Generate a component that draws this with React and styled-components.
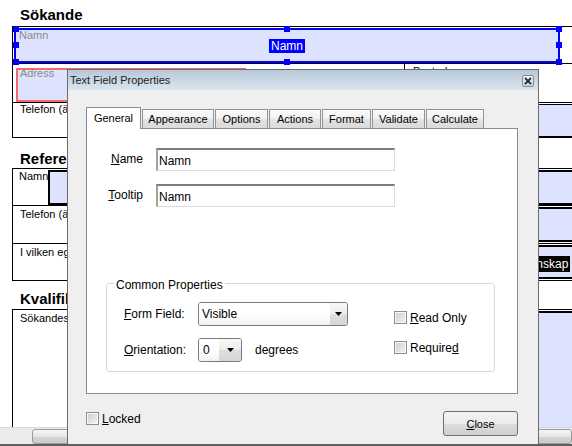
import React from 'react';
import styled, { createGlobalStyle } from 'styled-components';

const Global = createGlobalStyle`
  html, body { margin: 0; padding: 0; background: #fff; }
  body { font-family: "Liberation Sans", Arial, sans-serif; }
  * { box-sizing: border-box; }
`;

const Screen = styled.div`
  position: relative;
  width: 572px;
  height: 446px;
  overflow: hidden;
  display: flex;
  flex-direction: column;
  background: #fff;
`;

const Doc = styled.div`
  flex: 1;
  overflow: hidden;
  padding: 6px 0 0 12px;
`;

const Heading = styled.h2`
  margin: ${p => p.$mt}px 0 ${p => p.$mb}px 8px;
  font: bold 15px/17px "Liberation Sans", Arial, sans-serif;
  color: #000;
`;

const Table = styled.div`
  width: 600px;
  border-top: 1px solid #000;
  border-left: 1px solid #000;
`;

const Row = styled.div`
  display: flex;
  align-items: flex-start;
  height: ${p => p.$h + 1}px;
  border-bottom: 1px solid #000;
`;

const Cell = styled.div`
  flex: ${p => (p.$w ? 'none' : '1')};
  width: ${p => (p.$w ? `${p.$w}px` : 'auto')};
  height: 100%;
  display: flex;
  align-items: flex-start;
  border-left: ${p => (p.$divider ? '1px solid #000' : 'none')};
  padding-left: ${p => p.$pl || 0}px;
`;

const RowLabel = styled.div`
  flex: none;
  width: ${p => (p.$w ? `${p.$w}px` : 'auto')};
  padding: ${p => p.$pt ?? 1}px 0 0 ${p => p.$pl ?? 7}px;
  font: 11px/12px "Liberation Sans", Arial, sans-serif;
  color: #000;
  white-space: nowrap;
  overflow: hidden;
`;

const Field = styled.div`
  position: relative;
  flex: ${p => (p.$w ? 'none' : '1')};
  width: ${p => (p.$w ? `${p.$w}px` : 'auto')};
  height: ${p => p.$h}px;
  margin: ${p => p.$m || '0'};
  background: #dde3ff;
  border: ${p => p.$bw || 1}px solid ${p => p.$color || '#000'};
  display: flex;
  align-items: center;
  justify-content: center;
`;

const Caption = styled.span`
  position: absolute;
  left: ${p => p.$left}px;
  top: ${p => p.$top}px;
  font: 11px/12px "Liberation Sans", Arial, sans-serif;
  color: #8a8a8a;
`;

const NameBadge = styled.span`
  padding: 0 2px;
  font: 12px/${p => p.$lh || 14}px "Liberation Sans", Arial, sans-serif;
  color: #fff;
  background: ${p => p.$bg};
  white-space: nowrap;
  margin-top: ${p => p.$mt || 0}px;
`;

const Handle = styled.span`
  position: absolute;
  width: 6px;
  height: 6px;
  background: #0000ff;
  left: ${p => p.$x};
  top: ${p => p.$y};
`;

const ScrollTrack = styled.div`
  flex: none;
  height: 17px;
  background: #ebebeb;
  border-top: 1px solid #d8d8d8;
  padding: 1px 0 0 32px;
`;

const ScrollThumb = styled.div`
  width: 540px;
  height: 15px;
  border: 1px solid #9c9c9c;
  border-radius: 3px;
  background: linear-gradient(#f6f6f6, #e6e6e6 50%, #d4d4d4 51%, #cbcbcb);
`;

const BottomEdge = styled.div`
  flex: none;
  height: 2px;
  background: #5f5f5f;
`;

/* ---------- Dialog ---------- */

const Dialog = styled.div`
  position: absolute;
  left: 67px;
  top: 69px;
  width: 472px;
  bottom: 2px;
  border: 1px solid #6c6c6c;
  border-bottom: none;
  background: #efefef;
  display: flex;
  flex-direction: column;
  font-family: "Liberation Sans", Arial, sans-serif;
  color: #000;
`;

const TitleBar = styled.div`
  flex: none;
  height: 20px;
  display: flex;
  align-items: center;
  justify-content: space-between;
  padding: 0 4px 0 2px;
  background: linear-gradient(#b8c8d7, #dae5ef);
`;

const Title = styled.span`
  font-size: 11px;
  color: #222;
`;

const CloseBox = styled.span`
  width: 12px;
  height: 12px;
  margin-top: 1px;
  border: 1px solid #7d8a97;
  border-radius: 2px;
  background: linear-gradient(#f2f5f8, #c9d3dd);
  display: flex;
  align-items: center;
  justify-content: center;
`;

const DialogBody = styled.div`
  flex: 1;
  padding: 17px 20px 0 18px;
`;

const TabStrip = styled.div`
  display: flex;
  align-items: flex-end;
  gap: 1px;
  height: 21px;
`;

const Tab = styled.div`
  flex: none;
  position: relative;
  z-index: ${p => (p.$active ? 1 : 0)};
  width: ${p => p.$w}px;
  height: ${p => (p.$active ? 22 : 19)}px;
  margin-bottom: ${p => (p.$active ? -1 : 0)}px;
  padding-top: ${p => (p.$active ? 1 : 0)}px;
  border: 1px solid ${p => (p.$active ? '#898c95' : '#939393')};
  border-bottom: none;
  background: ${p => (p.$active ? '#fff' : 'linear-gradient(#fbfbfb, #f0f0f0 50%, #e3e3e3 51%, #dadada)')};
  font-size: 11px;
  line-height: 18px;
  text-align: center;
  color: #000;
`;

const Panel = styled.div`
  height: 266px;
  background: #fff;
  border: 1px solid #898c95;
  padding: 19px 0 0 19px;
`;

const FormGrid = styled.div`
  display: grid;
  grid-template-columns: 37px 239px;
  column-gap: 13px;
  row-gap: 13px;
`;

const FieldLabel = styled.label`
  padding-top: 4px;
  font-size: 12px;
  line-height: 14px;
  text-align: right;
  white-space: nowrap;
`;

const TextInput = styled.input`
  height: 23px;
  width: 239px;
  margin: 0;
  padding: 2px 0 0 1px;
  border-style: solid;
  border-width: 2px 1px 1px 2px;
  border-color: #7c7c7c #dcdcdc #dcdcdc #a2a2a2;
  background: #fff;
  font: 12px/14px "Liberation Sans", Arial, sans-serif;
  color: #000;
  outline: none;
  vertical-align: top;
`;

const GroupBox = styled.div`
  position: relative;
  width: 389px;
  height: 89px;
  margin-top: 76px;
  border: 1px solid #d3dbe1;
  border-radius: 3px;
  display: flex;
  padding: 18px 0 0 17px;
`;

const Legend = styled.span`
  position: absolute;
  left: 7px;
  top: -6px;
  padding: 0 2px;
  background: #fff;
  font-size: 12px;
  line-height: 14px;
`;

const GroupLeft = styled.div`
  display: flex;
  flex-direction: column;
  gap: 12px;
  width: 224px;
`;

const GroupRow = styled.div`
  display: flex;
  align-items: center;
  height: 24px;
`;

const GroupLabel = styled.span`
  flex: none;
  width: 74px;
  font-size: 12px;
  line-height: 14px;
  white-space: nowrap;
`;

const Select = styled.div`
  flex: none;
  width: ${p => p.$w}px;
  height: 24px;
  display: flex;
  border: 1px solid #7a7a7a;
  border-radius: 3px;
  overflow: hidden;
`;

const SelectValue = styled.span`
  flex: 1;
  padding-left: ${p => p.$pl}px;
  font-size: 12px;
  line-height: 22px;
  background: linear-gradient(#ffffff, #ffffff 55%, #f1f1f1);
`;

const SelectArrow = styled.span`
  flex: none;
  width: ${p => p.$w}px;
  display: flex;
  align-items: center;
  justify-content: center;
  background: linear-gradient(#f8f8f8, #ececec 50%, #dedede 51%, #d6d6d6);
`;

const Unit = styled.span`
  margin-left: 13px;
  font-size: 12px;
  line-height: 14px;
`;

const CheckCol = styled.div`
  display: flex;
  flex-direction: column;
  gap: 17px;
  margin-left: 46px;
  padding-top: 9px;
`;

const Check = styled.label`
  display: flex;
  align-items: center;
  gap: 3px;
  height: 13px;
  margin-top: ${p => p.$mt || 0}px;
  font-size: 12px;
  line-height: 14px;
  white-space: nowrap;
`;

const Box = styled.span`
  flex: none;
  width: 13px;
  height: 13px;
  border: 1px solid #8e8e8e;
  box-shadow: inset 0 0 0 1px #f6f6f6;
  background: linear-gradient(135deg, #cdcdcd, #f4f4f4);
`;

const Footer = styled.div`
  display: flex;
  justify-content: space-between;
  align-items: flex-start;
  margin-top: 17px;
`;

const Button = styled.button`
  width: 75px;
  height: 25px;
  margin: 0;
  padding: 0;
  border: 1px solid #707070;
  border-radius: 3px;
  background: linear-gradient(#f3f3f3, #ebebeb 50%, #dddddd 51%, #cfcfcf);
  font: 11px/14px "Liberation Sans", Arial, sans-serif;
  color: #000;
`;

const tabs = [
  ['General', 55, true],
  ['Appearance', 72],
  ['Options', 53],
  ['Actions', 52],
  ['Format', 49],
  ['Validate', 53],
  ['Calculate', 58],
];

const handles = [
  ['-3px', '-4px'],
  ['calc(50% - 3px)', '-4px'],
  ['calc(100% - 2px)', '-4px'],
  ['-3px', 'calc(50% - 4px)'],
  ['calc(100% - 2px)', 'calc(50% - 4px)'],
  ['-3px', 'calc(100% - 2px)'],
  ['calc(50% - 3px)', 'calc(100% - 2px)'],
  ['calc(100% - 2px)', 'calc(100% - 2px)'],
];

const Arrow = () => (
  <svg width="7" height="4" viewBox="0 0 7 4">
    <path d="M0 0h7L3.5 4z" fill="#000" />
  </svg>
);

export default function App() {
  return (
    <>
      <Global />
      <Screen>
        <Doc>
          <Heading $mt={0} $mb={3}>Sökande</Heading>
          <Table>
            <Row $h={36}>
              <Field $w={546} $h={35} $m="1px 0 0 1px" $bw={2} $color="#0000ff">
                <Caption $left={3} $top={-1}>Namn</Caption>
                <NameBadge $bg="#0000ff">Namn</NameBadge>
                {handles.map(([x, y], i) => (
                  <Handle key={i} $x={x} $y={y} />
                ))}
              </Field>
            </Row>
            <Row $h={38}>
              <Cell $w={391}>
                <Field $w={230} $h={34} $m="4px 0 0 3px" $bw={2} $color="#f26a6a">
                  <Caption $left={2} $top={-3}>Adress</Caption>
                </Field>
              </Cell>
              <Cell $divider $pl={1}>
                <RowLabel>Postadress</RowLabel>
              </Cell>
            </Row>
            <Row $h={34}>
              <RowLabel $w={240} $pt={0}>Telefon (även mobil)</RowLabel>
              <Field $h={33} $m="1px 0 0 0" />
            </Row>
          </Table>

          <Heading $mt={12} $mb={1}>Referenser</Heading>
          <Table>
            <Row $h={36}>
              <RowLabel $w={35} $pl={6} $pt={1}>Namn</RowLabel>
              <Field $h={35} $m="1px 0 0 0" $bw={2} />
            </Row>
            <Row $h={37}>
              <RowLabel $w={240} $pt={2}>Telefon (även mobil)</RowLabel>
              <Field $h={35} $m="1px 0 0 0" $bw={2} />
            </Row>
            <Row $h={36}>
              <RowLabel $w={419} $pt={2}>I vilken egenskap</RowLabel>
              <Field $h={34} $m="1px 0 0 0" $bw={2}>
                <NameBadge $bg="#000" $lh={16} $mt={3}>I vilken egenskap</NameBadge>
              </Field>
            </Row>
          </Table>

          <Heading $mt={9} $mb={2}>Kvalifikationer</Heading>
          <Table>
            <Row $h={200}>
              <RowLabel $w={240} $pt={2}>Sökandes kvalifikationer</RowLabel>
              <Field $h={190} $m="1px 0 0 0" $bw={2} />
            </Row>
          </Table>
        </Doc>
        <ScrollTrack>
          <ScrollThumb />
        </ScrollTrack>
        <BottomEdge />

        <Dialog>
          <TitleBar>
            <Title>Text Field Properties</Title>
            <CloseBox>
              <svg width="8" height="8" viewBox="0 0 8 8">
                <path d="M1 1l6 6M7 1L1 7" stroke="#2b2b2b" strokeWidth="1.8" />
              </svg>
            </CloseBox>
          </TitleBar>
          <DialogBody>
            <TabStrip>
              {tabs.map(([t, w, a]) => (
                <Tab key={t} $w={w} $active={a}>{t}</Tab>
              ))}
            </TabStrip>
            <Panel>
              <FormGrid>
                <FieldLabel><u>N</u>ame</FieldLabel>
                <TextInput readOnly value="Namn" />
                <FieldLabel><u>T</u>ooltip</FieldLabel>
                <TextInput readOnly value="Namn" />
              </FormGrid>
              <GroupBox>
                <Legend>Common Properties</Legend>
                <GroupLeft>
                  <GroupRow>
                    <GroupLabel><u>F</u>orm Field:</GroupLabel>
                    <Select $w={150}>
                      <SelectValue $pl={3}>Visible</SelectValue>
                      <SelectArrow $w={17}><Arrow /></SelectArrow>
                    </Select>
                  </GroupRow>
                  <GroupRow>
                    <GroupLabel><u>O</u>rientation:</GroupLabel>
                    <Select $w={44}>
                      <SelectValue $pl={4}>0</SelectValue>
                      <SelectArrow $w={22}><Arrow /></SelectArrow>
                    </Select>
                    <Unit>degrees</Unit>
                  </GroupRow>
                </GroupLeft>
                <CheckCol>
                  <Check><Box /><span><u>R</u>ead Only</span></Check>
                  <Check><Box /><span>Require<u>d</u></span></Check>
                </CheckCol>
              </GroupBox>
            </Panel>
            <Footer>
              <Check $mt={1}><Box /><span><u>L</u>ocked</span></Check>
              <Button><u>C</u>lose</Button>
            </Footer>
          </DialogBody>
        </Dialog>
      </Screen>
    </>
  );
}
